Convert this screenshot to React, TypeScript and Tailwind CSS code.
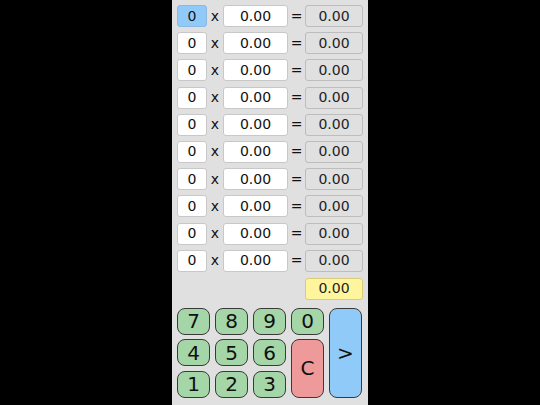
import React from "react";

const rows = Array.from({ length: 10 }, (_, i) => i);

function Key({ label, cls }: { label: string; cls: string }) {
  return (
    <div
      className={`flex items-center justify-center rounded-[8px] border border-[#3a3a3a] text-[20px] text-[#111] ${cls}`}
    >
      {label}
    </div>
  );
}

export default function App() {
  return (
    <div className="flex h-[405px] w-[540px] justify-center bg-black" style={{ fontFamily: '"DejaVu Sans", sans-serif' }}>
      <div className="flex h-full w-[196px] flex-col bg-[#e0e0e0] px-[5px] pt-[5px]">
        <div className="flex flex-col gap-[5.2px]">
          {rows.map((i) => (
            <div key={i} className="flex h-[22px] items-center">
              <div
                className={`flex h-full w-[30px] items-center justify-center rounded-[3px] border text-[14px] text-[#111] ${
                  i === 0 ? "border-[#8fb8e0] bg-[#90caf9]" : "border-[#c8c8c8] bg-white"
                }`}
              >
                0
              </div>
              <span className="w-[16px] text-center text-[14px] text-[#111]">x</span>
              <div className="flex h-full w-[65px] items-center justify-center rounded-[3px] border border-[#c8c8c8] bg-white text-[14px] text-[#111]">
                0.00
              </div>
              <span className="w-[17px] text-center text-[14px] text-[#111]">=</span>
              <div className="flex h-full w-[58px] items-center justify-center rounded-[3px] border border-[#bdbdbd] bg-[#e0e0e0] text-[14px] text-[#222]">
                0.00
              </div>
            </div>
          ))}
        </div>
        <div className="mt-[6px] flex justify-end">
          <div className="flex h-[22px] w-[58px] items-center justify-center rounded-[3px] border border-[#d8cc7a] bg-[#fff59d] text-[14px] text-[#222]">
            0.00
          </div>
        </div>
        <div className="mt-[8px] grid grid-cols-[33px_33px_33px_33px_33px] grid-rows-[27px_27px_27px] gap-x-[5px] gap-y-[4.5px]">
          <Key label="7" cls="bg-[#a5d6a7]" />
          <Key label="8" cls="bg-[#a5d6a7]" />
          <Key label="9" cls="bg-[#a5d6a7]" />
          <Key label="0" cls="bg-[#a5d6a7]" />
          <Key label=">" cls="row-span-3 bg-[#90caf9]" />
          <Key label="4" cls="bg-[#a5d6a7]" />
          <Key label="5" cls="bg-[#a5d6a7]" />
          <Key label="6" cls="bg-[#a5d6a7]" />
          <Key label="C" cls="row-span-2 bg-[#ef9a9a]" />
          <Key label="1" cls="bg-[#a5d6a7]" />
          <Key label="2" cls="bg-[#a5d6a7]" />
          <Key label="3" cls="bg-[#a5d6a7]" />
        </div>
      </div>
    </div>
  );
}
